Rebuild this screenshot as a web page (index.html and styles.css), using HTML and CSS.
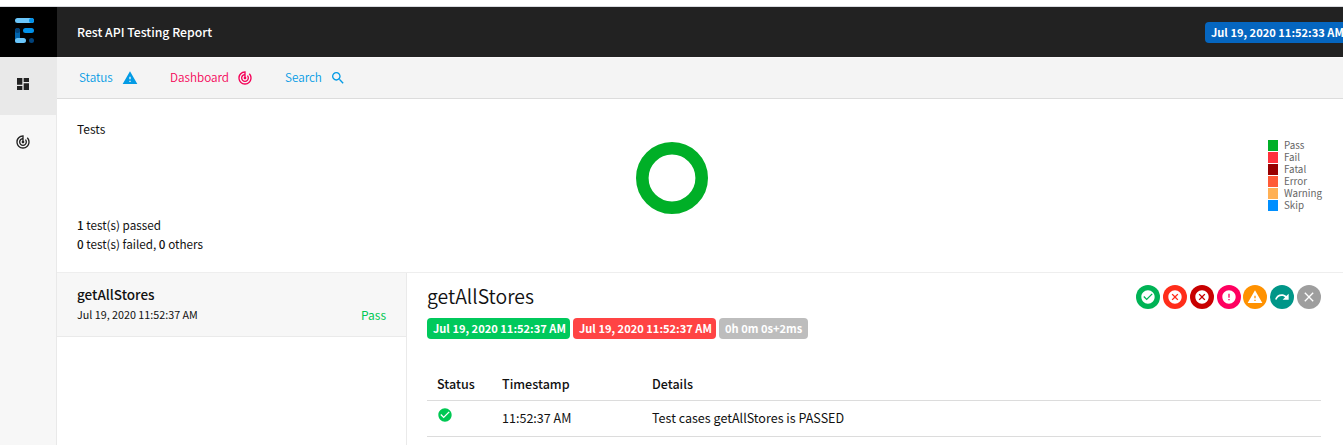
FILE: index.html
```html
<!DOCTYPE html>
<html lang="en">
<head>
<meta charset="utf-8">
<title>Rest API Testing Report</title>
<link rel="stylesheet" href="styles.css">
</head>
<body>
<svg class="defs" width="0" height="0">
  <symbol id="i-dash" viewBox="0 0 24 24"><path d="M3 13h8V3H3v10zm0 8h8v-6H3v6zm10 0h8V11h-8v10zm0-18v6h8V3h-8z"/></symbol>
  <symbol id="i-track" viewBox="0 0 24 24"><path d="M19.07 4.93l-1.41 1.41C19.1 7.79 20 9.79 20 12c0 4.42-3.58 8-8 8s-8-3.58-8-8c0-4.08 3.05-7.44 7-7.93v2.02C8.16 6.57 6 9.03 6 12c0 3.31 2.69 6 6 6s6-2.69 6-6c0-1.66-.67-3.16-1.76-4.24l-1.41 1.41C15.55 9.9 16 10.9 16 12c0 2.21-1.79 4-4 4s-4-1.79-4-4c0-1.86 1.28-3.41 3-3.86v2.14c-.6.35-1 .98-1 1.72 0 1.1.9 2 2 2s2-.9 2-2c0-.74-.4-1.38-1-1.72V2h-1C6.48 2 2 6.48 2 12s4.48 10 10 10 10-4.48 10-10c0-2.76-1.12-5.26-2.93-7.07z"/></symbol>
  <symbol id="i-warn" viewBox="0 0 24 24"><path d="M1 21h22L12 2 1 21zm12-3h-2v-2h2v2zm0-4h-2v-4h2v4z"/></symbol>
  <symbol id="i-search" viewBox="0 0 24 24"><path d="M15.5 14h-.79l-.28-.27C15.41 12.59 16 11.11 16 9.5 16 5.91 13.09 3 9.5 3S3 5.91 3 9.5 5.91 16 9.5 16c1.61 0 3.09-.59 4.23-1.57l.27.28v.79l5 4.99L20.49 19l-4.99-5zm-6 0C7.01 14 5 11.99 5 9.5S7.01 5 9.5 5 14 7.01 14 9.5 11.99 14 9.5 14z"/></symbol>
  <symbol id="i-check" viewBox="0 0 24 24"><path d="M12 2C6.48 2 2 6.48 2 12s4.48 10 10 10 10-4.48 10-10S17.52 2 12 2zm-2 15l-5-5 1.41-1.41L10 14.17l7.59-7.59L19 8l-9 9z"/></symbol>
  <symbol id="i-cancel" viewBox="0 0 24 24"><path d="M12 2C6.47 2 2 6.47 2 12s4.47 10 10 10 10-4.47 10-10S17.53 2 12 2zm5 13.59L15.59 17 12 13.41 8.41 17 7 15.59 10.59 12 7 8.41 8.41 7 12 10.59 15.59 7 17 8.41 13.41 12 17 15.59z"/></symbol>
  <symbol id="i-error" viewBox="0 0 24 24"><path d="M12 2C6.48 2 2 6.48 2 12s4.48 10 10 10 10-4.48 10-10S17.52 2 12 2zm1 15h-2v-2h2v2zm0-4h-2V7h2v6z"/></symbol>
  <symbol id="i-redo" viewBox="0 0 24 24"><path d="M18.4 10.6C16.55 8.99 14.15 8 11.5 8c-4.65 0-8.58 3.03-9.96 7.22L3.9 16c1.05-3.19 4.05-5.5 7.6-5.5 1.95 0 3.73.72 5.12 1.88L13 16h9V7l-3.6 3.6z"/></symbol>
  <symbol id="i-close" viewBox="0 0 24 24"><path d="M19 6.41L17.59 5 12 10.59 6.41 5 5 6.41 10.59 12 5 17.59 6.41 19 12 13.41 17.59 19 19 17.59 13.41 12z"/></symbol>
</svg>
<header class="topbar">
  <div class="logo">
    <svg width="20" height="26" viewBox="0 0 20 26">
      <rect x="0" y="0" width="19" height="5" rx="2.5" fill="#6bc6fa"/>
      <circle cx="16.5" cy="2.5" r="2.5" fill="#0091ea"/>
      <rect x="0" y="10" width="5" height="15" rx="2.5" fill="#0164ad"/>
      <circle cx="2.5" cy="12.5" r="2.5" fill="#01427a"/>
      <rect x="8" y="10" width="11" height="5" rx="2.5" fill="#0091ea"/>
      <rect x="0" y="20" width="11" height="5" rx="2.5" fill="#6bc6fa"/>
      <circle cx="16.5" cy="22.5" r="2.5" fill="#01427a"/>
    </svg>
  </div>
  <div class="report-name">Rest API Testing Report</div>
  <span class="badge run-date">Jul 19, 2020 11:52:33 AM</span>
</header>
<div class="body">
  <aside class="sidebar">
    <a class="side-item active"><svg class="icon"><use href="#i-dash"/></svg></a>
    <a class="side-item"><svg class="icon"><use href="#i-track"/></svg></a>
  </aside>
  <main class="main">
    <nav class="subnav">
      <a class="nav-link status"><span>Status</span><svg class="icon"><use href="#i-warn"/></svg></a>
      <a class="nav-link dash"><span>Dashboard</span><svg class="icon"><use href="#i-track"/></svg></a>
      <a class="nav-link search"><span>Search</span><svg class="icon"><use href="#i-search"/></svg></a>
    </nav>
    <section class="charts">
      <div class="counts">
        <div class="counts-title">Tests</div>
        <div class="counts-text"><div><b>1</b> test(s) passed</div><div><b>0</b> test(s) failed, <b>0</b> others</div></div>
      </div>
      <svg class="donut" width="72" height="72" viewBox="0 0 72 72"><circle cx="36" cy="36" r="29.7" fill="none" stroke="#00af27" stroke-width="12.6"/></svg>
      <ul class="legend">
        <li><i class="sw pass"></i>Pass</li>
        <li><i class="sw fail"></i>Fail</li>
        <li><i class="sw fatal"></i>Fatal</li>
        <li><i class="sw error"></i>Error</li>
        <li><i class="sw warning"></i>Warning</li>
        <li><i class="sw skip"></i>Skip</li>
      </ul>
    </section>
    <section class="split">
      <div class="list">
        <div class="test">
          <div>
            <div class="test-name">getAllStores</div>
            <div class="test-time">Jul 19, 2020 11:52:37 AM</div>
          </div>
          <span class="test-status">Pass</span>
        </div>
      </div>
      <div class="detail">
        <div class="detail-head">
          <h1 class="detail-title">getAllStores</h1>
          <div class="filters">
            <a class="round pass"><svg class="icon"><use href="#i-check"/></svg></a>
            <a class="round fail"><svg class="icon"><use href="#i-cancel"/></svg></a>
            <a class="round fatal"><svg class="icon"><use href="#i-cancel"/></svg></a>
            <a class="round error"><svg class="icon"><use href="#i-error"/></svg></a>
            <a class="round warning"><svg class="icon"><use href="#i-warn"/></svg></a>
            <a class="round skip"><svg class="icon"><use href="#i-redo"/></svg></a>
            <a class="round clear"><svg class="icon"><use href="#i-close"/></svg></a>
          </div>
        </div>
        <div class="badges">
          <span class="badge start">Jul 19, 2020 11:52:37 AM</span>
          <span class="badge end">Jul 19, 2020 11:52:37 AM</span>
          <span class="badge took">0h 0m 0s+2ms</span>
        </div>
        <div class="table">
          <div class="row head"><span>Status</span><span>Timestamp</span><span>Details</span></div>
          <div class="row"><span><svg class="icon ok"><use href="#i-check"/></svg></span><span>11:52:37 AM</span><span>Test cases getAllStores is PASSED</span></div>
        </div>
      </div>
    </section>
  </main>
</div>
</body>
</html>
```
FILE: styles.css
```css
* { box-sizing: border-box; }
body {
  margin: 0;
  height: 445px;
  overflow: hidden;
  display: flex;
  flex-direction: column;
  background: #fff;
  color: #111;
  font: 13px/20px "Noto Sans CJK SC", "Noto Sans CJK JP", sans-serif;
}
.defs { position: absolute; }
.icon { width: 16px; height: 16px; fill: currentColor; display: block; flex: none; }

.topbar { display: flex; align-items: center; height: 51px; margin-top: 6px; flex: none; background: #222; color: #fff; border-top: 1px solid #d9dbe0; }
.logo { width: 57px; height: 50px; background: #000; padding: 11px 0 0 15px; }
.logo svg { display: block; }
.report-name { margin-left: 20px; flex: 1; font-size: 12.28px; font-weight: 500; }
.badge { display: block; height: 21px; padding: 0 6px; border-radius: 4px; color: #fff; font-size: 11.1px; font-weight: 700; line-height: 21px; white-space: nowrap; }
.run-date { width: 143px; margin-right: -5px; flex: none; background: #0566c0; }

.body { display: flex; flex: 1; }
.sidebar { width: 57px; background: #f7f7f7; border-right: 1px solid #e9e9e9; flex: none; }
.side-item { display: flex; height: 58px; align-items: center; padding: 0 0 4px 15px; color: #222; }
.side-item.active { background: #e9e9e9; }
.main { flex: 1; display: flex; flex-direction: column; min-width: 0; }

.subnav { display: flex; height: 42px; padding-left: 22px; align-items: center; background: #f4f4f4; border-top: 1px solid #fbf9fa; border-bottom: 1px solid #dcdcdc; font-size: 11.7px; font-weight: 350; }
.nav-link { display: flex; align-items: center; color: #039be5; }
.nav-link span { margin-bottom: 2px; }
.nav-link .icon { margin-left: auto; }
.status { width: 59px; }
.dash { width: 83px; margin-left: 32px; color: #f50057; }
.search { width: 61px; margin-left: 32px; }

.charts { display: flex; height: 174px; border-bottom: 1px solid #eee; padding: 20px 21px 19px 20px; }
.counts { display: flex; flex-direction: column; justify-content: space-between; width: 559px; font-size: 11.7px; }
.counts-title { font-size: 12px; }
.counts-text { line-height: 19px; }
.counts b { font-weight: 500; }
.donut { margin-top: 23px; flex: none; }
.legend { list-style: none; margin: 21px 0 0 auto; padding: 0; width: 54px; font-size: 9.8px; line-height: 11px; color: #666; }
.legend li { display: flex; gap: 6px; height: 12px; }
.sw { width: 10px; height: 11px; flex: none; }
.sw.pass { background: #00af27; }
.sw.fail { background: #ff323c; }
.sw.fatal { background: #990000; }
.sw.error { background: #ff5b37; }
.sw.warning { background: #ffb055; }
.sw.skip { background: #008fff; }

.split { display: flex; flex: 1; }
.list { width: 350px; border-right: 1px solid #eaeaea; flex: none; }
.test { display: flex; justify-content: space-between; height: 64px; padding: 11px 20px 0; background: #f7f7f7; border-bottom: 1px solid #eaeaea; }
.test-name { font-size: 13.5px; font-weight: 500; line-height: 20px; }
.test-time { font-size: 10.75px; line-height: 22px; }
.test-status { margin-top: 21px; font-size: 12px; color: #00c853; }

.detail { flex: 1; padding: 12px 22px 0 20px; }
.detail-head { display: flex; justify-content: space-between; height: 33px; }
.detail-title { margin: 0; font-size: 19.4px; font-weight: 350; line-height: 22px; }
.filters { display: flex; gap: 2.8px; }
.round { display: flex; align-items: center; justify-content: center; width: 24px; height: 24px; border-radius: 50%; color: #fff; }
.round.pass { background: #00b355; }
.round.fail { background: #ff2d1a; }
.round.fatal { background: #c80000; }
.round.error { background: #ff0060; }
.round.warning { background: #ff9100; }
.round.skip { background: #009688; }
.round.clear { background: #9e9e9e; }
.badges { display: flex; gap: 3px; }
.start { width: 143px; background: #00c95c; }
.end { width: 143px; background: #ff4444; }
.took { width: 89px; background: #bdbdbd; }

.table { margin-top: 29px; }
.row { display: grid; grid-template-columns: 65px 150px 1fr; height: 36px; padding: 7px 10px 0; border-bottom: 1px solid #dcdcdc; font-size: 12.55px; }
.row.head { height: 33px; padding-top: 6px; font-weight: 500; }
.ok { color: #00c853; margin-top: -1px; }
```
